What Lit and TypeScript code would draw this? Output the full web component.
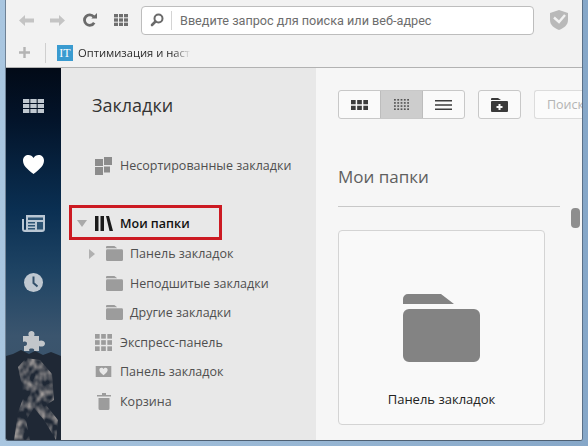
import { LitElement, html, css, svg } from "lit";
import { customElement } from "lit/decorators.js";

const folder = (w: number, fill: string) => html`<svg width="${w}" height="${(w * 68) / 77}" viewBox="0 0 77 68"><path fill="${fill}" d="M0 5a5 5 0 0 1 5-5h33l13 10H0zM0 21a6 6 0 0 1 6-6h65a6 6 0 0 1 6 6v41a6 6 0 0 1-6 6H6a6 6 0 0 1-6-6z"/></svg>`;

const cells = (w: number, h: number, fill: string, cols: number, rows: number, gap: number) => {
  const cw = (w - gap * (cols - 1)) / cols;
  const ch = (h - gap * (rows - 1)) / rows;
  const out = [];
  for (let r = 0; r < rows; r++)
    for (let c = 0; c < cols; c++)
      out.push(svg`<rect x="${c * (cw + gap)}" y="${r * (ch + gap)}" width="${cw}" height="${ch}" fill="${fill}"/>`);
  return out;
};

@customElement("app-root")
export class AppRoot extends LitElement {
  static styles = css`
    :host { display: block; width: 588px; height: 446px; overflow: hidden; font-family: "Open Sans", "Noto Sans", sans-serif; }
    svg { display: block; flex: none; }
    .frame { box-sizing: border-box; width: 588px; height: 446px; background: linear-gradient(90deg, #a9c6e0, #86a7c8); padding: 0 5px 5px 5px; display: flex; flex-direction: column; }
    .win { flex: 1; min-height: 0; display: flex; flex-direction: column; background: #f3f3f3; border-left: 1px solid #6f8296; border-right: 1px solid #5a7088; border-bottom: 1px solid #4d5f72; border-radius: 0 0 3px 3px; overflow: hidden; }
    .toolbar { height: 67px; flex: none; background: #f2f2f2; border-bottom: 1px solid #b2b2b2; display: flex; flex-direction: column; }
    .nav { height: 38px; display: flex; align-items: center; margin-top: 1px; padding-left: 13px; }
    .arrow { width: 31px; flex: none; }
    .reload { margin-left: 2px; width: 31px; flex: none; }
    .apps { width: 27px; flex: none; }
    .url { box-sizing: border-box; width: 393px; height: 29px; background: #fff; border: 1px solid #bdbdbd; border-radius: 4px; display: flex; align-items: center; flex: none; }
    .mag { width: 29px; height: 19px; border-right: 1px solid #d4d4d4; display: flex; align-items: center; justify-content: center; flex: none; }
    .url span { font-family: Roboto, "Open Sans", sans-serif; font-size: 12.65px; color: #6d6d6d; padding-left: 8px; white-space: nowrap; }
    .shield { margin-left: 16px; }
    .bm { height: 27px; display: flex; align-items: center; padding-left: 13px; }
    .plus { width: 26px; flex: none; }
    .sep { width: 1px; height: 20px; background: #cfcfcf; flex: none; }
    .fav { width: 16px; height: 16px; margin-left: 11px; background: #3a9bd0; color: #fff; font: 12px/16px "Liberation Serif", serif; text-align: center; flex: none; }
    .bmtext { margin-left: 5px; font-size: 11.2px; color: #2b2b2b; width: 113px; overflow: hidden; white-space: nowrap; -webkit-mask-image: linear-gradient(90deg, #000 84%, transparent); mask-image: linear-gradient(90deg, #000 84%, transparent); }

    .body { flex: 1; min-height: 0; display: flex; }
    .rail { width: 55px; flex: none; position: relative; overflow: hidden; box-sizing: border-box; padding-top: 8px; background: linear-gradient(180deg, #020a17 0%, #03142a 14%, #0a2f52 38%, #1f4464 55%, #3b556e 72%, #3a4f63 100%); display: flex; flex-direction: column; align-items: center; }
    .mount { position: absolute; left: 0; bottom: 0; width: 55px; height: 90px; }
    .ri { position: relative; height: 59px; display: flex; align-items: center; justify-content: center; flex: none; }
    .panel { width: 255px; flex: none; background: #e8e8e8; position: relative; padding-top: 25px; box-sizing: border-box; }
    h1 { margin: 0 0 0 31px; font-size: 18px; line-height: 24px; font-weight: 400; color: #333; }
    .rows { margin-top: 34px; display: flex; flex-direction: column; }
    .row { height: 29.5px; display: flex; align-items: center; font-size: 12.5px; color: #4f4f4f; white-space: nowrap; position: relative; }
    .ic { width: 17px; height: 18px; display: flex; align-items: center; justify-content: center; flex: none; margin-left: 34px; margin-right: 8px; }
    .gapped { margin-top: 28px; margin-bottom: 1px; }
    .strong { color: #111; font-weight: 600; }
    .sub .ic { margin-left: 45px; margin-right: 7px; }
    .tri { position: absolute; }
    .tdown { left: 16px; top: 11px; width: 0; height: 0; border-left: 5px solid transparent; border-right: 5px solid transparent; border-top: 7px solid #aaa; }
    .tright { left: 28px; top: 10px; width: 0; height: 0; border-top: 5px solid transparent; border-bottom: 5px solid transparent; border-left: 6px solid #b0b0b0; }
    .hl { position: absolute; left: 8px; top: -4px; width: 153px; height: 35px; box-sizing: border-box; border: 3px solid #cc1a22; }

    .main { flex: 1; min-width: 0; background: #f6f6f6; position: relative; overflow: hidden; padding: 22px 0 0 22px; }
    .tools { display: flex; height: 29px; }
    .seg { display: flex; flex: none; width: 127px; height: 29px; box-sizing: border-box; background: #fafafa; border: 1px solid #c8c8c8; border-radius: 3px; }
    .seg div { flex: 1; display: flex; align-items: center; justify-content: center; }
    .seg .on { background: #cdcdcd; border-left: 1px solid #bdbdbd; border-right: 1px solid #bdbdbd; }
    .btn { width: 43px; height: 29px; margin-left: 13px; flex: none; box-sizing: border-box; background: #fafafa; border: 1px solid #c8c8c8; border-radius: 3px; display: flex; align-items: center; justify-content: center; }
    .search { width: 70px; height: 29px; margin-left: 13px; box-sizing: border-box; background: #fbfbfb; border: 1px solid #dcdcdc; border-right: 0; border-radius: 3px 0 0 3px; font-size: 12.5px; color: #b4b4b4; line-height: 27px; padding-left: 12px; overflow: hidden; flex: none; }
    h2 { margin: 46px 0 0; font-size: 17px; line-height: 24px; font-weight: 400; color: #5f5f5f; }
    .rule { width: 222px; height: 1px; background: #c8c8c8; margin-top: 17px; }
    .card { box-sizing: border-box; width: 207px; height: 195px; margin-top: 23px; background: #f9f9f9; border: 1px solid #d4d4d4; border-radius: 4px; display: flex; flex-direction: column; align-items: center; padding-top: 63px; }
    .card span { margin-top: 28px; font-size: 13px; color: #222; }
    .thumb { position: absolute; right: 2px; top: 140px; width: 9px; height: 20px; border-radius: 4px; background: #8e8e8e; }
  `;

  render() {
    return html`<div class="frame"><div class="win">
      <div class="toolbar">
        <div class="nav">
          <div class="arrow"><svg width="15" height="11" viewBox="0 0 15 11"><path fill="#c4c4c4" d="M6 0 0 5.500 6 11V7.500h9v-4H6z"/></svg></div>
          <div class="arrow"><svg width="15" height="11" viewBox="0 0 15 11"><path fill="#c4c4c4" d="M9 0l6 5.500L9 11V7.500H0v-4h9z"/></svg></div>
          <div class="reload"><svg width="14" height="14" viewBox="0 0 15 15"><path fill="none" stroke="#6b6b6b" stroke-width="3" d="M12 10.500A5.600 5.600 0 1 1 11.500 4"/><path fill="#6b6b6b" d="M9 6h6V0z"/></svg></div>
          <div class="apps"><svg width="14" height="12" viewBox="0 0 14 12">${cells(14, 12, "#6f6f6f", 3, 3, 1)}</svg></div>
          <div class="url">
            <div class="mag"><svg width="14" height="14" viewBox="0 0 14 14"><circle cx="8.500" cy="5.500" r="4" fill="none" stroke="#6a6a6a" stroke-width="2"/><path stroke="#6a6a6a" stroke-width="2.600" stroke-linecap="round" d="M5.500 8.500 2 12"/></svg></div>
            <span>Введите запрос для поиска или веб-адрес</span>
          </div>
          <div class="shield"><svg width="18" height="20" viewBox="0 0 18 20"><path fill="#b9b9b9" d="M9 0l9 3v7c0 5-4 8-9 10-5-2-9-5-9-10V3z"/><path fill="none" stroke="#f2f2f2" stroke-width="2.400" d="M4 7.500l5 4.500 6-7"/></svg></div>
        </div>
        <div class="bm">
          <div class="plus"><svg width="11" height="11" viewBox="0 0 11 11"><path fill="#b4b4b4" d="M4.300 0h2.400v4.300H11v2.400H6.700V11H4.300V6.700H0V4.300h4.300z"/></svg></div>
          <div class="sep"></div>
          <div class="fav">IT</div>
          <div class="bmtext">Оптимизация и настройка</div>
        </div>
      </div>
      <div class="body">
        <div class="rail">
          <svg class="mount" viewBox="0 0 55 90">
            <defs>
              <filter id="rock" x="0" y="0" width="100%" height="100%">
                <feTurbulence type="fractalNoise" baseFrequency="0.13 0.1" numOctaves="2" seed="11"/>
                <feColorMatrix values="0 0 0 0 0.46  0 0 0 0 0.42  0 0 0 0 0.4  1.800 0 0 0 -0.600"/>
                <feComposite in2="SourceGraphic" operator="in"/>
                <feGaussianBlur stdDeviation="0.5"/>
              </filter>
            </defs>
            <path fill="#1f2835" d="M0 6 7 4l8-4 8 4 6-3 8 4 8-3 10 4v84H0z"/>
            <path filter="url(#rock)" fill="#fff" d="M12 17l8-9 14 2 12 14 2 26-8 5 12 15-2 20-12-20-10-12-8 12 4 20H8l4-28 6-16z"/>
          </svg>
          <div class="ri"><svg width="21" height="14" viewBox="0 0 21 14">${cells(21, 14, "#c0c8d0", 3, 3, 1)}</svg></div>
          <div class="ri"><svg width="21" height="19" viewBox="0 0 21 19"><path fill="#fff" d="M10.500 19C4 14 0 10.500 0 5.500 0 2 2.500 0 5.500 0c2 0 4 1 5 3 1-2 3-3 5-3C18.500 0 21 2 21 5.500 21 10.500 17 14 10.500 19z"/></svg></div>
          <div class="ri"><svg width="23" height="17" viewBox="0 0 23 17"><path fill="#b9c6d3" d="M4 0h19v14a3 3 0 0 1-3 3H3a3 3 0 0 1-3-3V4h2v10a1 1 0 0 0 2 0z"/><path fill="#2d5474" d="M6 2.500h15V5H6zM6 7h7v1.500H6zM6 10h7v1.500H6zM6 13h7v1.500H6zM15 7h6v7.500h-6z"/></svg></div>
          <div class="ri"><svg width="19" height="19" viewBox="0 0 19 19"><circle cx="9.500" cy="9.500" r="9.500" fill="#bfc8d1"/><path fill="none" stroke="#33506a" stroke-width="2" d="M9.500 3.500V10l4 3.500"/></svg></div>
          <div class="ri"><svg width="22" height="22" viewBox="0 0 22 22"><path fill="#c2c6ca" d="M0 5h6C5 4 5 0 8.500 0S12 4 11 5h5v5c1-1 6-1 6 2.500S17 16 16 15v5h-5c.5-1 .5-2.500-2.500-2.500S6 19 6.500 20H1v-5c2 .5 3-1 3-2.500S2.500 10 0 11z"/></svg></div>
        </div>
        <div class="panel">
          <h1>Закладки</h1>
          <div class="rows">
            <div class="row"><div class="ic"><svg width="17" height="18" viewBox="0 0 17 18"><path fill="#8c8c8c" d="M0 2h8v7H0zM9 0h8v8H9zM0 10h8v8H0zM9 9.500h6v6H9z"/></svg></div>Несортированные закладки</div>
            <div class="row gapped strong"><div class="hl"></div><div class="tri tdown"></div><div class="ic"><svg width="18" height="15" viewBox="0 0 18 15"><path fill="#1a1a1a" d="M0 0h3.500v15H0zM5.500 0H9v15H5.500zM11 0h3l4 15h-3.500z"/></svg></div>Мои папки</div>
            <div class="row sub"><div class="tri tright"></div><div class="ic">${folder(17, "#9c9c9c")}</div>Панель закладок</div>
            <div class="row sub"><div class="ic">${folder(17, "#9c9c9c")}</div>Неподшитые закладки</div>
            <div class="row sub"><div class="ic">${folder(17, "#9c9c9c")}</div>Другие закладки</div>
            <div class="row"><div class="ic"><svg width="17" height="17" viewBox="0 0 17 17">${cells(17, 17, "#9c9c9c", 3, 3, 1.500)}</svg></div>Экспресс-панель</div>
            <div class="row"><div class="ic"><svg width="17" height="11" viewBox="0 0 17 12"><path fill="#9c9c9c" d="M0 0h17v12H0z"/><path fill="#e8e8e8" d="M8.500 10C5 7.500 4 6 4 4.200 4 2.800 5 2 6.200 2c1 0 1.800.5 2.300 1.300C9 2.500 9.800 2 10.800 2 12 2 13 2.800 13 4.200 13 6 12 7.500 8.500 10z"/></svg></div>Панель закладок</div>
            <div class="row"><div class="ic"><svg width="14" height="17" viewBox="0 0 14 17"><path fill="#9c9c9c" d="M0 2h5V0h4v2h5v1.500H0zM1.500 5h11v10.500a1.500 1.500 0 0 1-1.500 1.500H3a1.500 1.500 0 0 1-1.500-1.500z"/></svg></div>Корзина</div>
          </div>
        </div>
        <div class="main">
          <div class="tools">
            <div class="seg">
              <div><svg width="17" height="10" viewBox="0 0 17 10">${cells(17, 10, "#3d3d3d", 3, 2, 1.500)}</svg></div>
              <div class="on"><svg width="15" height="11" viewBox="0 0 15 11">${cells(15, 11, "#555", 5, 4, 1.500)}</svg></div>
              <div><svg width="17" height="10" viewBox="0 0 17 10"><path fill="#3d3d3d" d="M0 0h17v1.600H0zM0 4.200h17v1.600H0zM0 8.400h17V10H0z"/></svg></div>
            </div>
            <div class="btn"><svg width="17" height="14" viewBox="0 0 17 14"><path fill="#3a3a3a" d="M0 1a1 1 0 0 1 1-1h6l3 2H0zM0 4a1 1 0 0 1 1-1h15a1 1 0 0 1 1 1v9a1 1 0 0 1-1 1H1a1 1 0 0 1-1-1z"/><path fill="#fafafa" d="M7.500 6h2v2h2v2h-2v2h-2v-2h-2V8h2z"/></svg></div>
            <div class="search">Поиск</div>
          </div>
          <h2>Мои папки</h2>
          <div class="rule"></div>
          <div class="card">${folder(77, "#838383")}<span>Панель закладок</span></div>
          <div class="thumb"></div>
        </div>
      </div>
    </div></div></div>`;
  }
}
